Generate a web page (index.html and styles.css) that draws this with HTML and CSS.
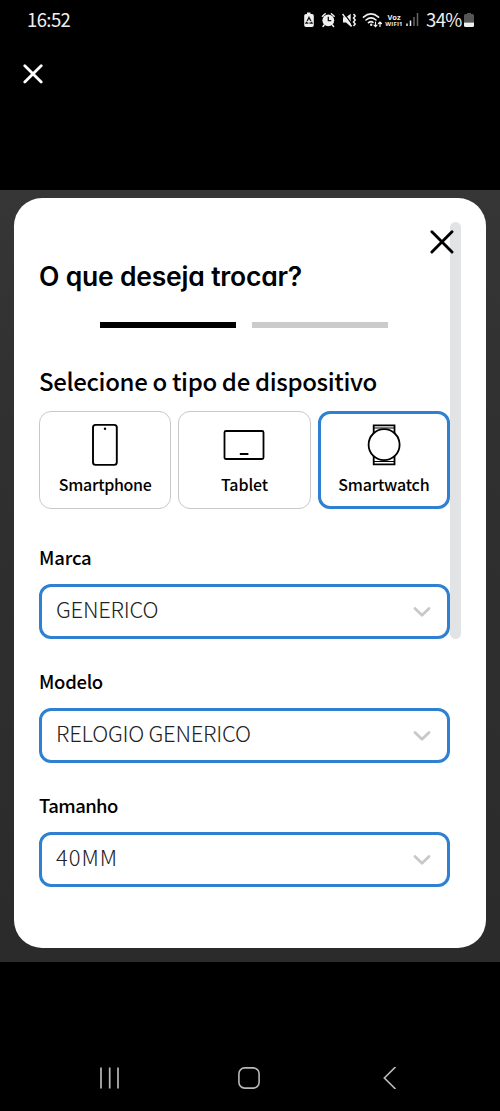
FILE: index.html
```html
<!DOCTYPE html>
<html lang="pt-BR">
<head>
<meta charset="utf-8">
<title>O que deseja trocar?</title>
<link rel="stylesheet" href="styles.css">
</head>
<body>
<div class="screen">
  <header class="status">
    <span class="clock">16:52</span>
    <div class="indicators">
      <svg class="sys-icons" width="82" height="20" viewBox="304 10 82 20">
        <path fill="#f0f0f0" d="M307 14h1V12.500h3.500V14h1.500q1.800 0 1.800 1.800v9.400q0 1.800-1.800 1.800h-6q-1.800 0-1.800-1.800v-9.400q0-1.800 1.800-1.800z"/>
        <path fill="none" stroke="#111" stroke-width="1.300" stroke-dasharray="4 1" d="M310 17.500l3 5.700h-6z"/>
        <circle cx="329.300" cy="20.300" r="5.900" fill="#f0f0f0"/>
        <path fill="none" stroke="#f0f0f0" stroke-width="1.500" stroke-linecap="round" d="M323.400 16.200l2.800-2.500M335.200 16.200l-2.800-2.500M325.200 25l-1.200 1.500M333.400 25l1.200 1.500"/>
        <path fill="none" stroke="#111" stroke-width="1.300" d="M329.300 16.800v3.800h3"/>
        <path fill="#f0f0f0" d="M344 17.300h3l4.700-3.600v12.800l-4.700-3.900h-3z"/>
        <path fill="none" stroke="#000" stroke-width="1.200" d="M344.800 13.200l9 12"/>
        <path fill="none" stroke="#f0f0f0" stroke-width="1.400" d="M343.600 14l9 12.500"/>
        <path fill="none" stroke="#f0f0f0" stroke-width="1.500" d="M354.500 14l1.700 2-1.700 2 1.700 2-1.700 2 1.700 2-1.700 2"/>
        <g fill="none" stroke="#f0f0f0" stroke-width="1.600" stroke-linecap="round">
          <path d="M364.500 17.200q7.500-6.500 15 0M367 20q5-4.400 10 0M369.500 22.700q2.500-2 4.500-.4"/>
          <path stroke-width="1.200" d="M376.500 22v4.500M375 25.200l1.500 1.500 1.500-1.500M381 26.500V22M379.500 23.500l1.500-1.500 1.500 1.500"/>
        </g>
        <circle cx="372.200" cy="24.800" r="1.200" fill="#f0f0f0"/>
      </svg>
      <div class="vowifi"><span>Voz</span><span>WIFI1</span></div>
      <svg class="signal" width="13" height="14" viewBox="0 0 13 14">
        <path stroke="#eee" stroke-width="1.500" d="M1 10.500V13M4.500 7.500V13"/>
        <path stroke="#666" stroke-width="1.500" d="M8 4v9M11.500 0v13"/>
      </svg>
      <span class="percent">34%</span>
      <svg class="battery" width="10" height="14" viewBox="0 0 10 14">
        <path fill="#555" d="M3 0h4v1h1.500Q10 1 10 2.500V9.500H0v-7Q0 1 1.500 1H3z"/>
        <path fill="#f0f0f0" d="M0 9.500h10v3q0 1.500-1.500 1.500h-7Q0 14 0 12.500z"/>
      </svg>
    </div>
  </header>

  <div class="toolbar">
    <svg width="20" height="20" viewBox="0 0 20 20"><path fill="none" stroke="#fff" stroke-width="2.800" stroke-linecap="round" d="M1.800 1.700l16.400 16.400M18.200 1.700L1.800 18.100"/></svg>
  </div>

  <main class="backdrop">
    <section class="modal">
      <div class="scrollbar"></div>
      <svg class="close" width="24" height="24" viewBox="0 0 24 24"><path fill="none" stroke="#000" stroke-width="2.900" stroke-linecap="round" d="M1.900 1.800L22 22M22 1.800L1.900 22"/></svg>

      <h1 class="title">O que deseja trocar?</h1>
      <div class="steps"><i class="step step-on"></i><i class="step"></i></div>

      <h2 class="subtitle">Selecione o tipo de dispositivo</h2>
      <div class="devices">
        <div class="device">
          <svg width="44" height="44" viewBox="0 0 44 44" fill="none" stroke="#000" stroke-width="1.900"><rect x="10" y="2.900" width="23.800" height="40" rx="2.600"/><circle cx="22" cy="6.800" r="1.200" fill="#000" stroke="none"/></svg>
          <span class="device-name n-phone">Smartphone</span>
        </div>
        <div class="device">
          <svg width="44" height="44" viewBox="0 0 44 44" fill="none" stroke="#000" stroke-width="1.800"><rect x="2.500" y="9" width="39" height="28" rx="1.500"/><path stroke-width="2" d="M17.800 32h8.600"/></svg>
          <span class="device-name n-tablet">Tablet</span>
        </div>
        <div class="device device-on">
          <svg width="44" height="44" viewBox="0 0 44 44" fill="none" stroke="#000" stroke-width="1.800"><path d="M11.700 12V3.400h20.800V12M11.700 33v9.300h20.800V33"/><path stroke-width="1.200" d="M12 6h20M12 39.500h20"/><circle cx="22.100" cy="22.700" r="15.500" fill="#fff"/></svg>
          <span class="device-name n-watch">Smartwatch</span>
        </div>
      </div>

      <div class="field">
        <label class="label l-marca">Marca</label>
        <div class="select"><span class="value v-marca">GENERICO</span><svg width="18" height="12" viewBox="0 0 18 12"><path class="chevron" d="M2 2.500l7 6.700 7-6.700"/></svg></div>
      </div>
      <div class="field">
        <label class="label l-modelo">Modelo</label>
        <div class="select"><span class="value v-modelo">RELOGIO GENERICO</span><svg width="18" height="12" viewBox="0 0 18 12"><path class="chevron" d="M2 2.500l7 6.700 7-6.700"/></svg></div>
      </div>
      <div class="field">
        <label class="label l-tamanho">Tamanho</label>
        <div class="select"><span class="value v-tamanho">40MM</span><svg width="18" height="12" viewBox="0 0 18 12"><path class="chevron" d="M2 2.500l7 6.700 7-6.700"/></svg></div>
      </div>
    </section>
  </main>

  <nav class="navbar">
    <svg width="22" height="22" viewBox="0 0 22 22" stroke="#b8b8b8" stroke-width="1.700"><path d="M4 .5v21M12.700 .5v21M21 .5v21"/></svg>
    <svg width="22" height="22" viewBox="0 0 22 22" fill="none" stroke="#b8b8b8" stroke-width="1.600"><rect x=".9" y=".9" width="20.200" height="20.200" rx="5.800"/></svg>
    <svg width="22" height="22" viewBox="0 0 22 22" fill="none" stroke="#b8b8b8" stroke-width="1.700"><path d="M16.500 0L5.400 11l11.100 11"/></svg>
  </nav>
</div>
</body>
</html>
```
FILE: styles.css
```css
* { box-sizing: border-box; }
body { margin: 0; background: #000; font-family: "Noto Sans CJK SC", "Noto Sans", sans-serif; color: #000; }
h1, h2 { margin: 0; font-weight: 500; }
svg { display: block; flex: none; }
.screen { width: 500px; height: 1111px; display: flex; flex-direction: column; overflow: hidden; }

.status { height: 40px; padding: 0 26px 0 27px; display: flex; justify-content: space-between; align-items: center; color: #eee; }
.clock, .percent { font-family: "Noto Sans CJK SC", sans-serif; font-size: 18.500px; line-height: 20px; }
.clock { letter-spacing: -.6px; margin-top: -2px; }
.indicators { display: flex; align-items: center; }
.vowifi { width: 18px; display: flex; flex-direction: column; align-items: center; margin: 0 3px 0 0; font: 700 7.500px/8px "Open Sans", sans-serif; }
.vowifi span:last-child { font-size: 6px; line-height: 6px; letter-spacing: .2px; }
.signal { margin-right: 7px; }
.percent { width: 36px; margin: -2px 2px 0 0; letter-spacing: -.6px; }

.toolbar { height: 150px; padding: 24px 23px; }

.backdrop { height: 772px; padding: 7.500px 14px 14px; background: linear-gradient(#363636, #303030 30%, #2b2b2b); }
.modal { position: relative; height: 750.500px; padding: 61.500px 36px 0 25px; background: #fff; border-radius: 28px; }
.scrollbar { position: absolute; left: 436px; top: 24.500px; width: 11px; height: 417px; border-radius: 6px; background: #e2e3e5; }
.close { position: absolute; left: 415.500px; top: 32.500px; }

.title { height: 63px; font: 600 26.500px/34px Inter, sans-serif; font-feature-settings: "cv11"; letter-spacing: -.2px; white-space: nowrap; }
.steps { height: 6px; display: flex; gap: 16px; padding-left: 61px; }
.step { width: 136px; background: #cbcbcb; }
.step-on { background: #000; }

.subtitle { height: 83px; padding-top: 35px; font-size: 24px; line-height: 36px; letter-spacing: -.35px; white-space: nowrap; }
.devices { display: grid; grid-template-columns: repeat(3, minmax(0, 1fr)); gap: 7px; height: 98px; }
.device { display: flex; flex-direction: column; align-items: center; border: 1.500px solid #c8c8c8; border-radius: 12px; padding-top: 10px; }
.device-on { border: 3px solid #2f80d0; padding-top: 8px; }
.device-name { font-size: 16px; line-height: 24px; margin-top: 6px; font-weight: 500; letter-spacing: -.3px; white-space: nowrap; }
.n-tablet { letter-spacing: -.1px; }
.n-watch { letter-spacing: -.2px; }

.field { height: 124px; padding-top: 33px; }
.label { display: block; height: 42px; font-size: 18.500px; line-height: 30px; font-weight: 500; }
.l-marca { letter-spacing: -.15px; }
.l-modelo { letter-spacing: -.3px; }
.l-tamanho { letter-spacing: -.6px; }
.select { height: 55px; display: flex; align-items: center; justify-content: space-between; padding: 0 16px 0 14px; border: 3px solid #2f80d0; border-radius: 12px; }
.value { margin-top: -7px; font-size: 22px; line-height: 30px; font-weight: 300; color: #222; letter-spacing: -.25px; white-space: nowrap; }
.v-tamanho { letter-spacing: 1px; }
.chevron { fill: none; stroke: #c8c8c8; stroke-width: 2.800; stroke-linecap: round; stroke-linejoin: round; }

.navbar { flex: 1; padding: 105px 99px 0 97px; display: flex; justify-content: space-between; }
```
